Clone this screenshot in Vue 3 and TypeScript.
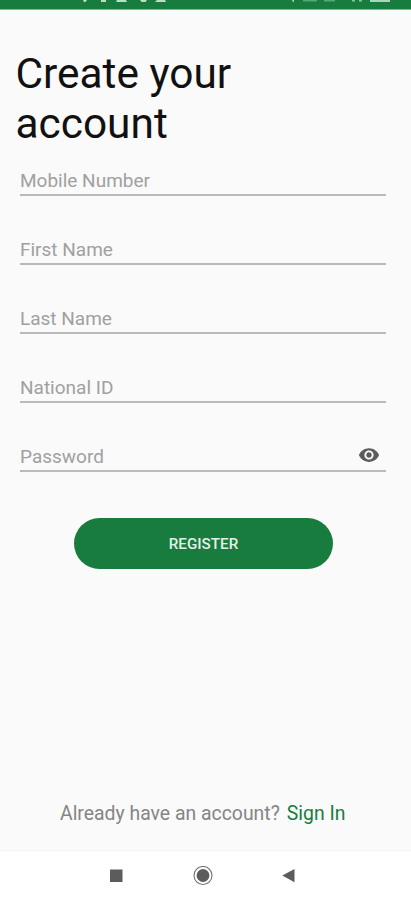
<script setup lang="ts">
import { ref } from 'vue'

interface Field {
  id: string
  label: string
  type: string
}

const fields: Field[] = [
  { id: 'mobile', label: 'Mobile Number', type: 'tel' },
  { id: 'first', label: 'First Name', type: 'text' },
  { id: 'last', label: 'Last Name', type: 'text' },
  { id: 'national', label: 'National ID', type: 'text' },
  { id: 'password', label: 'Password', type: 'password' },
]

const values = ref<Record<string, string>>({})
const showPassword = ref(false)

function inputType(field: Field): string {
  return field.type === 'password' && showPassword.value ? 'text' : field.type
}
</script>

<template>
  <div class="screen">
    <header class="status-bar">
      <svg width="411" height="9" viewBox="0 0 411 9" aria-hidden="true">
        <g fill="#b9dfc5">
          <path d="M83 0h4l-1.500 2h-1.500z" />
          <path d="M101 0h5v2h-5z" />
          <path d="M117 0h9l1 2h-11z" />
          <path d="M140 0h7l-1.500 2h-4z" />
          <path d="M157 0h8l1 2h-11z" />
        </g>
        <g fill="#a9d6b7">
          <path d="M292 0h2v2h-1z" />
          <path d="M303 0h14v1.500h-14zM324 0h11v1.500h-11z" opacity=".45" />
          <path d="M352 0h3v1.500h-3zM359 0h3v1.500h-3z" opacity=".8" />
          <path d="M370 0h20v2h-20z" />
        </g>
      </svg>
    </header>

    <main class="content">
      <h1 class="title">Create your<br />account</h1>

      <form class="form" @submit.prevent>
        <div v-for="field in fields" :key="field.id" class="field">
          <input
            v-model="values[field.id]"
            class="input"
            :type="inputType(field)"
            :placeholder="field.label"
          />
          <button
            v-if="field.type === 'password'"
            class="eye"
            type="button"
            aria-label="Toggle password visibility"
            @click="showPassword = !showPassword"
          >
            <svg width="22" height="22" viewBox="0 0 24 24" fill="#5c5c5c" aria-hidden="true">
              <path
                d="M12 4.500C7 4.500 2.730 7.610 1 12c1.730 4.390 6 7.500 11 7.500s9.270-3.110 11-7.500c-1.730-4.390-6-7.500-11-7.500zM12 17c-2.760 0-5-2.240-5-5s2.240-5 5-5 5 2.240 5 5-2.240 5-5 5zm0-8c-1.660 0-3 1.340-3 3s1.340 3 3 3 3-1.340 3-3-1.340-3-3-3z"
              />
            </svg>
          </button>
        </div>
        <button class="register" type="submit">REGISTER</button>
      </form>

      <p class="signin">
        <span>Already have an account?</span>
        <a class="link">Sign In</a>
      </p>
    </main>

    <nav class="nav-bar">
      <svg width="14" height="14" viewBox="0 0 14 14" aria-hidden="true">
        <rect x="1" y=".5" width="12.500" height="12.500" fill="#5c5c5c" />
      </svg>
      <svg width="20" height="20" viewBox="0 0 20 20" aria-hidden="true">
        <circle cx="10" cy="9.500" r="9" fill="none" stroke="#707070" stroke-width="1.100" />
        <circle cx="10" cy="9.500" r="6.400" fill="#5c5c5c" />
      </svg>
      <svg width="14" height="14" viewBox="0 0 14 14" aria-hidden="true">
        <path d="M12.500 0v13.200L.3 6.600z" fill="#5c5c5c" />
      </svg>
    </nav>
  </div>
</template>

<style>
body {
  margin: 0;
}
</style>

<style scoped>
.screen {
  display: flex;
  flex-direction: column;
  width: 411px;
  height: 900px;
  overflow: hidden;
  background: #fafafa;
  font-family: Roboto, "Liberation Sans", sans-serif;
}
.status-bar {
  height: 9px;
  background: #187c3f;
  border-bottom: 1px solid #7db793;
}
.status-bar svg {
  display: block;
}
.content {
  display: flex;
  flex: 1;
  flex-direction: column;
}
.title {
  margin: 39px 0 0 15.500px;
  color: #111;
  font-size: 42.400px;
  font-weight: 400;
  line-height: 50px;
}
.form {
  display: flex;
  flex-direction: column;
  margin: -1px 25px 0 20px;
}
.field {
  display: flex;
  box-sizing: border-box;
  height: 69px;
  padding-bottom: 21px;
  align-items: stretch;
}
.input {
  flex: 1;
  min-width: 0;
  padding: 20px 0 0;
  border: 0;
  border-bottom: 2px solid #bababa;
  outline: 0;
  background: transparent;
  color: #222;
  font: 400 19px/26px Roboto, "Liberation Sans", sans-serif;
}
.input::placeholder {
  color: #a0a0a0;
  opacity: 1;
}
.eye {
  display: flex;
  padding: 20px 6px 0 0;
  border: 0;
  border-bottom: 2px solid #bababa;
  background: transparent;
}
.register {
  width: 259px;
  height: 51px;
  margin: 25px 0 0 54px;
  padding: 1px 0 0;
  border: 0;
  border-radius: 26px;
  background: #187c3f;
  color: #e3f0e7;
  font: 500 15.200px/50px Roboto, "Liberation Sans", sans-serif;
}
.signin {
  display: flex;
  gap: 7px;
  margin: auto 0 23px 60px;
  color: #858585;
  font-size: 19.400px;
  line-height: 26px;
  white-space: nowrap;
}
.link {
  color: #187c3f;
}
.nav-bar {
  display: flex;
  box-sizing: border-box;
  height: 50px;
  padding: 0 115px 0 109px;
  border-top: 1px solid #f3f3f3;
  background: #fff;
  align-items: center;
  justify-content: space-between;
}
</style>
